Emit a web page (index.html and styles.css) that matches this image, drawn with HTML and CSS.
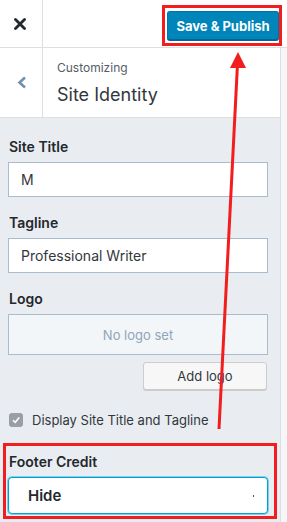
FILE: index.html
```html
<!DOCTYPE html>
<html>
    <head>
        <title>Customize: Site Identity</title>
        <link rel="stylesheet" href="styles.css">
    </head>

    <body>
        <div class="customizer">
            <!-- Top bar -->
            <div class="topBar">
                <div class="closeBtn">
                    <svg width="12" height="12" viewBox="0 0 12 12"><path d="M1.5 1.5 L10.5 10.5 M10.5 1.5 L1.5 10.5" stroke="#23282d" stroke-width="2.8" stroke-linecap="round"/></svg>
                </div>
                <div class="topSpacer"></div>
                <div class="markBox saveMark">
                    <button class="publishBtn">Save &amp; Publish</button>
                </div>
            </div>

            <div class="panel">
                <div class="sectionHead">
                    <div class="backBtn">
                        <svg width="10" height="13" viewBox="0 0 10 13"><path d="M8 1.5 L2.5 6.5 L8 11.5" fill="none" stroke="#7191ad" stroke-width="2.6"/></svg>
                    </div>
                    <div class="sectionTitle">
                        <span class="crumb">Customizing</span>
                        <span class="titleText">Site Identity</span>
                    </div>
                </div>

                <div class="controls">
                    <div class="control">
                        <label class="ctlLabel">Site Title</label>
                        <input class="textField" type="text" value="M">
                    </div>
                    <div class="control">
                        <label class="ctlLabel">Tagline</label>
                        <input class="textField" type="text" value="Professional Writer">
                    </div>
                    <div class="control">
                        <label class="ctlLabel">Logo</label>
                        <div class="logoPlaceholder">No logo set</div>
                        <div class="logoActions">
                            <button class="plainBtn">Add logo</button>
                        </div>
                    </div>
                    <div class="checkRow">
                        <span class="checkBox">
                            <svg width="10" height="10" viewBox="0 0 10 10"><path d="M2 5.2 L4.2 7.4 L8.2 2.6" fill="none" stroke="#fff" stroke-width="1.6"/></svg>
                        </span>
                        <span>Display Site Title and Tagline</span>
                    </div>
                    <div class="markBox footerMark">
                        <label class="ctlLabel">Footer Credit</label>
                        <div class="selectField">
                            <span>Hide</span>
                            <span class="selectDot"></span>
                        </div>
                    </div>
                </div>
            </div>

            <!-- annotation arrow -->
            <svg class="arrow" width="287" height="522" viewBox="0 0 287 522">
                <line x1="219" y1="429" x2="237.5" y2="64" stroke="#f21d1d" stroke-width="3"/>
                <polygon points="238,52 230,68 246,68" fill="#f21d1d"/>
            </svg>
        </div>
    </body>
</html>
```

FILE: styles.css
```css
body {
    margin: 0;
    width: 287px;
    height: 522px;
    overflow: hidden;
    background: #f5f6f7;
    font-family: "Inter", "Noto Sans", sans-serif;
    color: #23282d;
}

.customizer {
    position: relative;
    width: 287px;
    height: 522px;
}

/* top bar */
.topBar {
    display: flex;
    align-items: flex-start;
    height: 47px;
    background: #fff;
    border-bottom: 1px solid #dcdfe3;
}

.closeBtn {
    width: 43px;
    height: 47px;
    border-right: 1px solid #dcdfe3;
    display: flex;
    align-items: center;
    justify-content: center;
    box-sizing: border-box;
    padding-right: 2px;
}

.topSpacer {
    flex: 1;
}

.markBox {
    border: 3px solid #f21d1d;
}

.saveMark {
    margin: 5px 5px 0 0;
    padding: 3px 0 3px 2px;
}

.publishBtn {
    display: block;
    width: 112px;
    height: 29px;
    padding: 0;
    background: #0085ba;
    border: 1px solid #0073aa;
    border-bottom-color: #006799;
    border-radius: 3px;
    box-shadow: 0 1px 0 #006799;
    color: #fff;
    font-family: inherit;
    font-size: 13px;
    font-weight: 700;
}

/* panel */
.panel {
    width: 280px;
    height: 474px;
    background: #e9edf1;
    border-right: 1px solid #dcdfe3;
}

.sectionHead {
    display: flex;
    height: 69px;
    background: #fff;
    border-bottom: 1px solid #dcdfe3;
}

.backBtn {
    width: 43px;
    border-right: 1px solid #dcdfe3;
    display: flex;
    align-items: center;
    justify-content: center;
    padding-left: 1px;
    box-sizing: border-box;
}

.sectionTitle {
    display: flex;
    flex-direction: column;
    padding: 11px 0 0 14px;
}

.crumb {
    font-size: 12px;
    line-height: 18px;
    color: #555d66;
}

.titleText {
    margin-top: 6px;
    font-size: 18px;
    line-height: 24px;
    color: #32373c;
}

.controls {
    padding: 20px 12px 0 8px;
}

.control {
    margin-bottom: 17px;
}

.ctlLabel {
    display: block;
    font-size: 14px;
    font-weight: 600;
    line-height: 18px;
    margin: 0 0 6px 1px;
    color: #23282d;
}

.textField {
    display: block;
    width: 260px;
    height: 35px;
    box-sizing: border-box;
    margin: 0;
    padding: 0 12px;
    border: 1px solid #a9bccd;
    background: #fff;
    font-family: inherit;
    font-size: 14px;
    color: #32373c;
}

.logoPlaceholder {
    height: 41px;
    box-sizing: border-box;
    border: 1px solid #a9bccd;
    background: #f3f6f9;
    display: flex;
    align-items: center;
    justify-content: center;
    font-size: 13px;
    color: #8fa5b8;
}

.logoActions {
    display: flex;
    justify-content: flex-end;
    margin-top: 7px;
}

.plainBtn {
    width: 124px;
    height: 28px;
    margin-right: 1px;
    background: #f7f7f7;
    border: 1px solid #cccccc;
    border-radius: 3px;
    box-shadow: 0 1px 0 #cccccc;
    font-family: inherit;
    font-size: 13px;
    color: #32373c;
}

.checkRow {
    display: flex;
    align-items: center;
    gap: 9px;
    margin: 22px 0 0 1px;
    font-size: 13px;
    color: #32373c;
}

.checkBox {
    width: 14px;
    height: 14px;
    border-radius: 3px;
    background: #9a9fa5;
    display: flex;
    align-items: center;
    justify-content: center;
}

.footerMark {
    margin: 15px -9px 0 -5px;
    padding: 7px 6px 2px 2px;
}

.selectField {
    display: flex;
    align-items: center;
    justify-content: space-between;
    height: 37px;
    box-sizing: border-box;
    padding: 0 13px 0 19px;
    background: #fff;
    border: 1px solid #00a0d2;
    border-radius: 4px;
    box-shadow: 0 0 0 1px #7fd0ec;
    font-size: 15px;
    font-weight: 600;
    color: #23282d;
}

.selectDot {
    width: 1px;
    height: 2px;
    background: #555;
}

.arrow {
    position: absolute;
    left: 0;
    top: 0;
    pointer-events: none;
}
```
